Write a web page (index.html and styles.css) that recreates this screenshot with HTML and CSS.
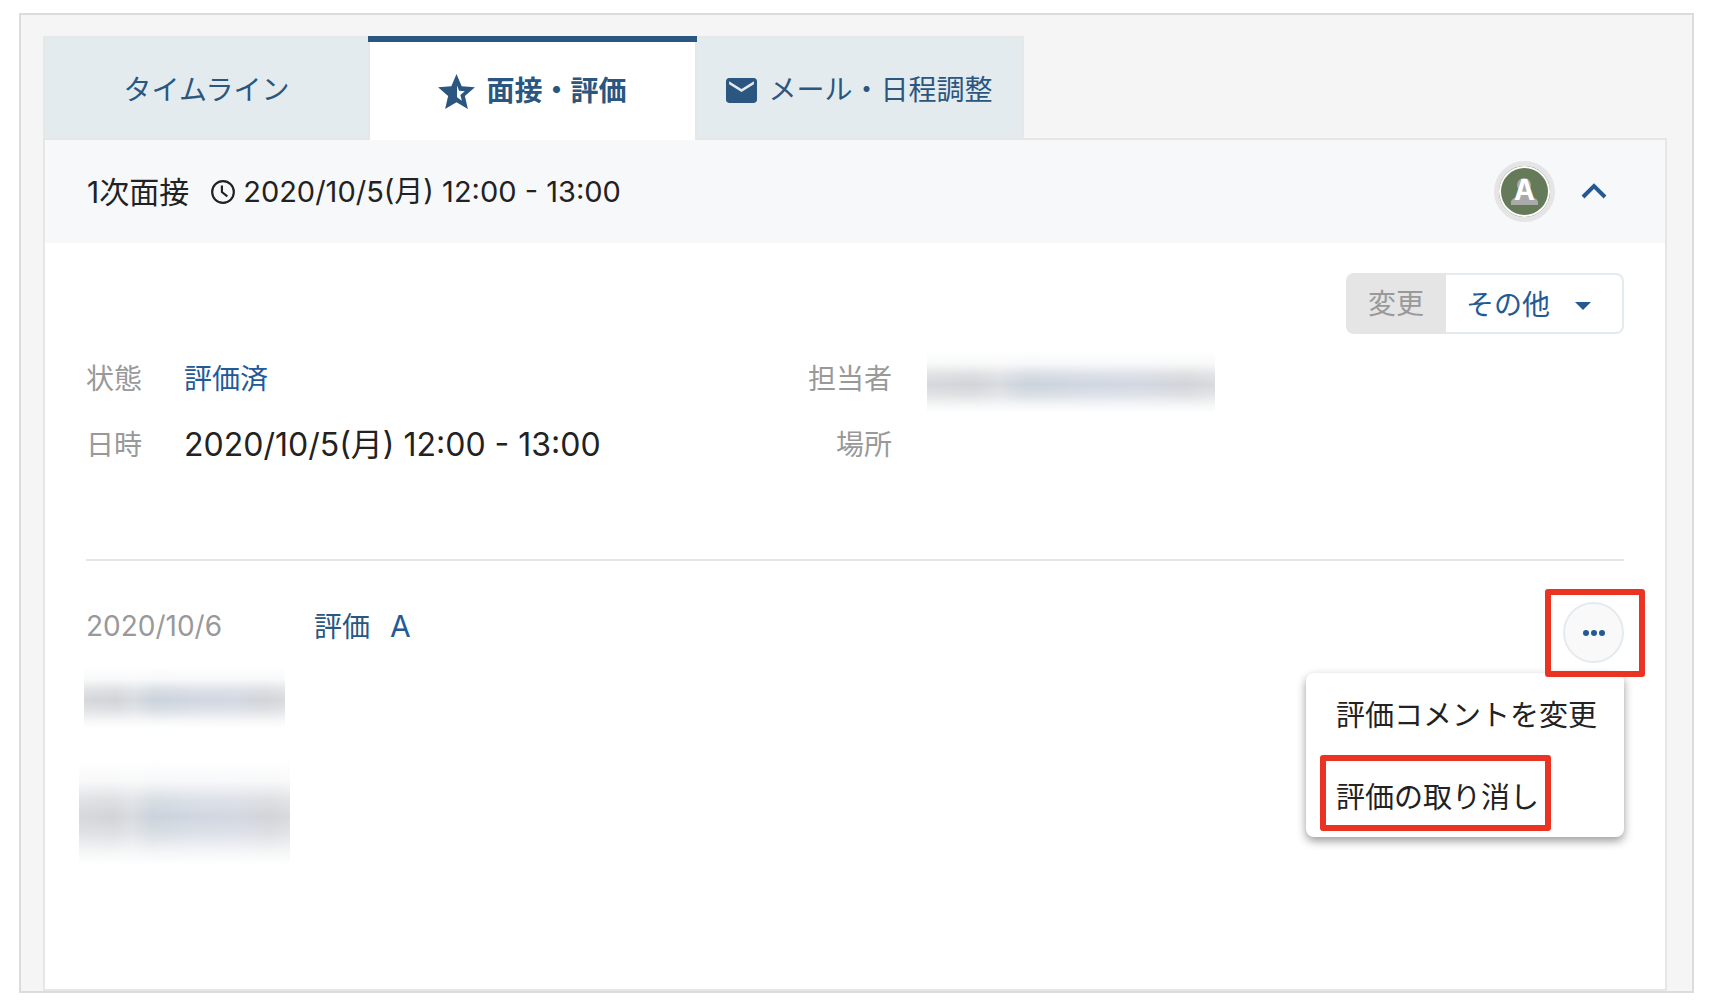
FILE: index.html
```html
<!DOCTYPE html>
<html lang="ja">

<head>
    <meta charset="UTF-8">
    <meta name="viewport" content="width=device-width, initial-scale=1.0">
    <title>面接・評価</title>
    <link rel="stylesheet" href="styles.css">
</head>

<body>

    <main class="frame">
        <nav class="tabs" role="tablist">
            <button class="tab" role="tab" aria-selected="false">タイムライン</button>
            <button class="tab active" role="tab" aria-selected="true">
                <svg class="icon-star" viewBox="2 2 20 19" aria-hidden="true">
                    <path d="M22 9.24l-7.19-.62L12 2 9.19 8.63 2 9.24l5.46 4.73L5.82 21 12 17.27 18.18 21l-1.63-7.03L22 9.24zM12.3 14.6V8.2l1.1 2.9 3.1.3-2.4 2 .8 3.1-2.6-1.9z" />
                </svg>
                面接・評価
            </button>
            <button class="tab" role="tab" aria-selected="false">
                <svg class="icon-mail" viewBox="2 4 20 16" aria-hidden="true">
                    <path d="M20 4H4c-1.1 0-1.99.9-1.99 2L2 18c0 1.1.9 2 2 2h16c1.1 0 2-.9 2-2V6c0-1.1-.9-2-2-2zm0 4l-8 5-8-5V6l8 5 8-5v2z" />
                </svg>
                メール・日程調整
            </button>
        </nav>

        <section class="panel">
            <header class="panel-header">
                <h1>1次面接</h1>
                <svg class="icon-clock" viewBox="0 0 24 24" aria-hidden="true">
                    <circle cx="12" cy="12" r="10" />
                    <path d="M11 6v6l5 4" />
                </svg>
                <time class="date">2020/10/5(月) 12:00 - 13:00</time>
                <span class="avatar">
                    <svg viewBox="0 0 51 51" aria-hidden="true">
                        <circle cx="25" cy="19" r="7" />
                        <path d="M12 39v-3c0-3 5-5 9-6l1-5h7l1 5c4 1 9 3 9 6v3z" />
                    </svg>
                    <b>A</b>
                </span>
                <button class="collapse" aria-label="閉じる">
                    <svg viewBox="0 0 26 17" aria-hidden="true">
                        <path d="M2 14L13 3l11 11" />
                    </svg>
                </button>
            </header>

            <div class="panel-body">
                <div class="actions">
                    <button class="change" disabled>変更</button>
                    <div class="more">
                        <select aria-label="その他の操作">
                            <option>その他</option>
                        </select>
                    </div>
                </div>

                <div class="details">
                    <dl>
                        <dt>状態</dt>
                        <dd><a href="#">評価済</a></dd>
                        <dt>日時</dt>
                        <dd class="datetime">2020/10/5(月) 12:00 - 13:00</dd>
                    </dl>
                    <dl class="right">
                        <dt>担当者</dt>
                        <dd><span class="masked masked-owner"></span></dd>
                        <dt>場所</dt>
                        <dd></dd>
                    </dl>
                </div>

                <div class="evaluation">
                    <div class="evaluator">
                        <time>2020/10/6</time>
                        <span class="masked masked-name"></span>
                        <span class="masked masked-comment"></span>
                    </div>
                    <p class="rating">評価 <a class="grade" href="#">A</a></p>

                    <div class="options">
                        <button class="dots" aria-label="メニュー" aria-haspopup="true">
                            <svg viewBox="0 0 22 6" aria-hidden="true">
                                <circle cx="3" cy="3" r="3" />
                                <circle cx="11" cy="3" r="3" />
                                <circle cx="19" cy="3" r="3" />
                            </svg>
                        </button>
                        <ul class="menu">
                            <li><button>評価コメントを変更</button></li>
                            <li><button class="marked">評価の取り消し</button></li>
                        </ul>
                    </div>
                </div>
            </div>
        </section>
    </main>

</body>

</html>
```
FILE: styles.css
```css
*,
*::before,
*::after {
    box-sizing: border-box;
}

body {
    margin: 13px 18px 13px 19px;
    background-color: #ffffff;
    color: #222;
    font-family: Inter, "Noto Sans CJK JP", sans-serif;
    font-size: 28px;
    line-height: 40px;
}

button,
select {
    font: inherit;
    color: inherit;
    border: none;
    background: none;
    padding: 0;
    cursor: pointer;
}

a {
    color: #235a96;
    text-decoration: none;
}

h1,
p,
dl,
dd,
ul {
    margin: 0;
    padding: 0;
}

.frame {
    display: flex;
    flex-direction: column;
    min-height: calc(100vh - 26px);
    padding: 21px 25px 0 22px;
    border: 2px solid #dcdcdc;
    background-color: #f5f5f5;
}

/* Tabs */
.tabs {
    display: flex;
}

.tab {
    display: flex;
    align-items: center;
    justify-content: center;
    gap: 11px;
    width: 329px;
    height: 104px;
    padding-top: 4px;
    margin-right: -2px;
    border: 2px solid #e6e8e8;
    background-color: #e4ebee;
    color: #2a567f;
    white-space: nowrap;
}

.tab:first-child {
    width: 327px;
}

.tab.active {
    position: relative;
    z-index: 1;
    border-bottom: none;
    background-color: #ffffff;
    font-weight: bold;
}

.tab.active::before {
    content: "";
    position: absolute;
    top: -2px;
    left: -2px;
    right: -2px;
    height: 6px;
    background-color: #2a567f;
}

.tab svg {
    flex: none;
    fill: #2a567f;
}

.icon-star {
    width: 37px;
    height: 35px;
}

.icon-mail {
    width: 31px;
    height: 25px;
}

/* Panel */
.panel {
    flex: 1;
    margin-top: -2px;
    border: 2px solid #e6e6e6;
    background-color: #ffffff;
}

.panel-header {
    display: flex;
    align-items: center;
    height: 103px;
    padding: 0 58px 0 42px;
    background-color: #f7f8fa;
}

.panel-header h1 {
    font-size: 30px;
    font-weight: normal;
}

.date {
    font-size: 29px;
}

.icon-clock {
    width: 26px;
    height: 26px;
    margin: 0 7px 0 21px;
    fill: none;
    stroke: #222;
    stroke-width: 2;
}

.avatar {
    display: grid;
    width: 61px;
    height: 61px;
    margin-left: auto;
    border: 5px solid #e5e5e5;
    border-radius: 50%;
    background-color: #647a58;
    box-shadow: inset 0 0 0 2px #ffffff;
    color: #ffffff;
    text-align: center;
}

.avatar svg,
.avatar b {
    grid-area: 1 / 1;
}

.avatar svg {
    fill: #a9aaa9;
}

.avatar b {
    padding-top: 4px;
}

.collapse {
    width: 26px;
    height: 40px;
    margin-left: 26px;
}

.collapse svg {
    display: block;
    width: 26px;
    height: 17px;
    fill: none;
    stroke: #235a96;
    stroke-width: 4;
}

.panel-body {
    padding: 30px 41px 0;
}

.actions {
    display: flex;
    justify-content: flex-end;
    height: 61px;
}

.change {
    width: 100px;
    border-radius: 8px 0 0 8px;
    background-color: #e5e5e5;
    color: #999;
    cursor: default;
}

.more {
    position: relative;
    width: 178px;
}

.more select {
    width: 100%;
    height: 100%;
    padding: 2px 52px 0 20px;
    border: 2px solid #e4ebf0;
    border-left: none;
    border-radius: 0 8px 8px 0;
    appearance: none;
    color: #235a96;
}

.more::after {
    content: "";
    position: absolute;
    top: 29px;
    right: 33px;
    border: 8px solid transparent;
    border-top-color: #235a96;
    border-bottom: none;
    pointer-events: none;
}

.details {
    display: grid;
    grid-template-columns: 720px 1fr;
    padding: 25px 0 94px;
    border-bottom: 2px solid #e6e6e6;
}

.details dl {
    display: grid;
    grid-template-columns: 57px 1fr;
    grid-auto-rows: 40px;
    gap: 26px 41px;
}

.details .right {
    grid-template-columns: 86px 1fr;
    column-gap: 35px;
}

.right dt {
    text-align: right;
}

.datetime {
    font-size: 32px;
}

dt,
.evaluator time {
    color: #999;
}

/* Hidden personal data */
.masked {
    display: block;
    background:
        linear-gradient(#ffffff, rgba(255, 255, 255, 0.85) 20%, rgba(255, 255, 255, 0.3) 38%, rgba(255, 255, 255, 0.05) 54%, rgba(255, 255, 255, 0.3) 70%, rgba(255, 255, 255, 0.8) 88%, #ffffff),
        linear-gradient(90deg, #d3d6da, #cfd2d5 16%, #d6dadf 25%, #c8d0d9 35%, #ced4df 55%, #d0d5df 75%, #cfd2d6 90%, #d6d8dc);
}

.masked-owner {
    width: 288px;
    height: 62px;
    margin-top: -8px;
}

/* Evaluation */
.evaluation {
    display: grid;
    grid-template-columns: 228px 1fr 61px;
    padding-top: 41px;
}

.evaluator time {
    display: block;
    padding-top: 4px;
}

.masked-name {
    width: 201px;
    height: 61px;
    margin: 21px 0 0 -2px;
}

.masked-comment {
    width: 211px;
    height: 105px;
    margin: 32px 0 0 -7px;
}

.rating {
    padding-top: 4px;
    color: #2a567f;
}

.grade {
    margin-left: 12px;
    font-size: 30px;
}

.options {
    position: relative;
}

.dots {
    display: flex;
    align-items: center;
    justify-content: center;
    width: 61px;
    height: 61px;
    border: 2px solid #e4ebf0;
    border-radius: 50%;
    background-color: #f9f9f9;
}

.dots svg {
    width: 22px;
    height: 6px;
    fill: #235a96;
}

/* Red marks around the menu button and the cancel item */
.options::before,
.marked::before {
    content: "";
    position: absolute;
    border: 6px solid #ea3323;
    border-radius: 3px;
    pointer-events: none;
}

.options::before {
    z-index: 3;
    top: -13px;
    left: -18px;
    width: 100px;
    height: 88px;
}

.marked::before {
    inset: 0 73px 6px 14px;
}

.menu {
    position: absolute;
    z-index: 2;
    top: 71px;
    right: 0;
    width: 318px;
    border-radius: 8px;
    background-color: #ffffff;
    box-shadow: 0 4px 10px rgba(0, 0, 0, 0.4);
    list-style: none;
}

.menu button {
    position: relative;
    width: 100%;
    height: 82px;
    padding: 3px 0 0 30px;
    font-size: 29px;
    text-align: left;
    white-space: nowrap;
}
```
